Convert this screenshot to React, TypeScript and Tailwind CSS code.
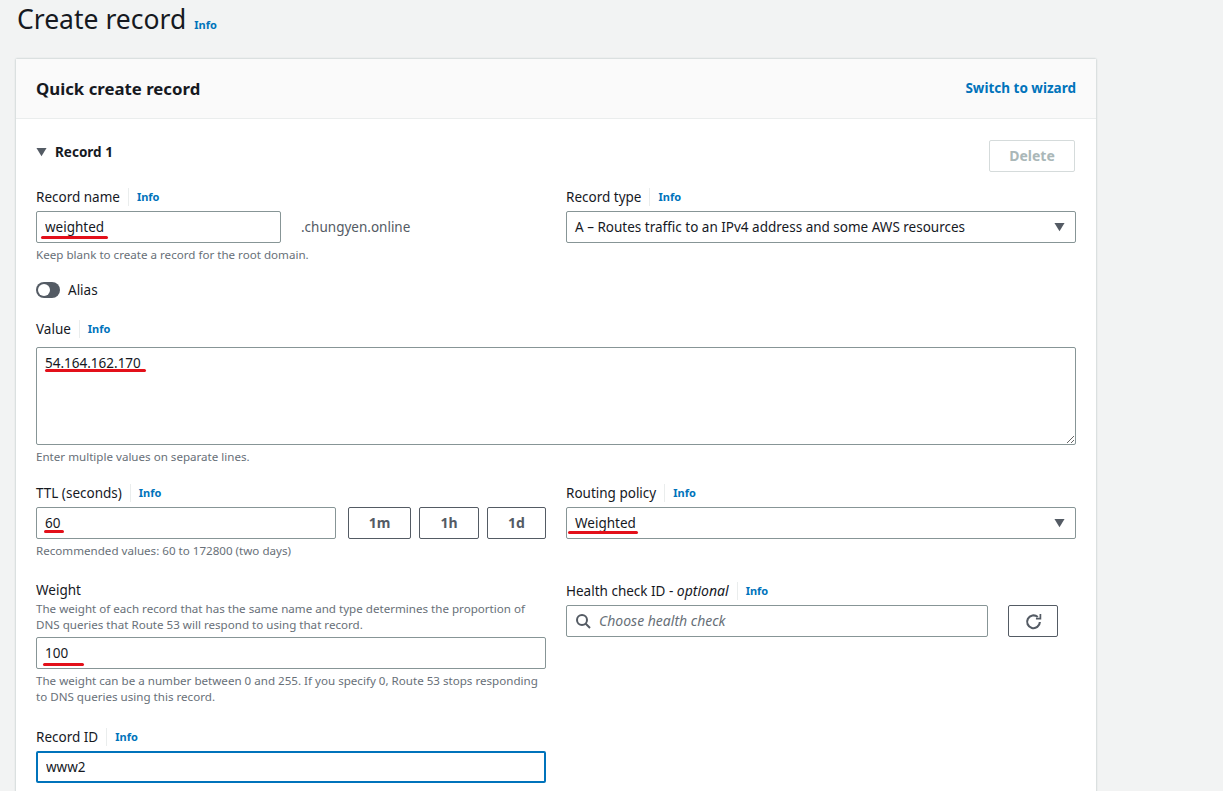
import type { ReactNode } from "react"

const font = "font-['Noto_Sans',sans-serif]"

const Info = () => (
  <span className="ml-2 border-l border-[#eaeded] pl-2 text-[11px] leading-[18px] font-bold text-[#0073bb]">Info</span>
)

const Label = ({ children }: { children: ReactNode }) => (
  <div className="flex h-[22px] items-center text-[13.5px] text-[#16191f]">
    <span>{children}</span>
    <Info />
  </div>
)

const Hint = ({ children, className = "" }: { children: ReactNode; className?: string }) => (
  <div className={`text-[11.6px] leading-4 text-[#687078] ${className}`}>{children}</div>
)

const TextInput = ({ value, mark, focused }: { value: string; mark?: string; focused?: boolean }) => (
  <div className="relative w-full">
    <input
      readOnly
      defaultValue={value}
      className={`h-8 w-full rounded-[2px] bg-white px-2 text-[13.5px] text-[#16191f] outline-none ${
        focused ? "border-2 border-[#0073bb]" : "border border-[#879596]"
      }`}
    />
    {mark && <span className={`absolute h-[3px] rounded-sm bg-[#e3101a] ${mark}`} />}
  </div>
)

const Caret = ({ className = "" }: { className?: string }) => (
  <svg viewBox="0 0 12 10" className={`h-2.5 w-[11px] ${className}`}>
    <path d="M0.5 0.5h11L6 9.5z" fill="#545b64" />
  </svg>
)

const SelectBox = ({ value, mark }: { value: string; mark?: string }) => (
  <div className="relative flex h-8 items-center justify-between rounded-[2px] border border-[#879596] bg-white pr-[10px] pl-2 text-[13.5px] text-[#16191f]">
    <span>{value}</span>
    <Caret />
    {mark && <span className={`absolute h-[3px] rounded-sm bg-[#e3101a] ${mark}`} />}
  </div>
)

const TtlButton = ({ label, width }: { label: string; width: string }) => (
  <div
    className={`flex h-8 items-center justify-center rounded-[2px] border border-[#545b64] text-sm font-bold text-[#545b64] ${width}`}
  >
    {label}
  </div>
)

export default function App() {
  return (
    <div className={`h-[791px] w-[1223px] overflow-hidden bg-[#f2f3f3] ${font}`}>
      <div className="flex h-[59px] items-start pt-[1px] pl-[17px]">
        <h1 className="text-[26.5px] leading-9 font-normal text-[#16191f]">Create record</h1>
        <span className="mt-4 ml-2 text-[11px] leading-4 font-bold text-[#0073bb]">Info</span>
      </div>

      <div className="ml-[16px] w-[1080px] bg-white pb-10 shadow-[0_0_2px_#aab7b8]">
        <div className="flex h-[60px] items-center justify-between border-b border-[#eaeded] bg-[#fafafa] px-5">
          <h2 className="text-[16.8px] font-bold text-[#16191f]">Quick create record</h2>
          <span className="text-[13.5px] font-bold text-[#0073bb]">Switch to wizard</span>
        </div>

        <div className="px-5 pt-[21px]">
          <div className="flex items-start justify-between">
            <div className="mt-[2px] flex items-center gap-2 pr-2 text-[13.5px] font-bold text-[#16191f]">
              <Caret />
              Record 1
            </div>
            <div className="mr-px flex h-8 w-[86px] items-center justify-center rounded-[2px] border border-[#d5dbdb] text-sm font-bold text-[#aab7b8]">
              Delete
            </div>
          </div>

          <div className="mt-[14px] grid grid-cols-2 gap-5">
            <div>
              <Label>Record name</Label>
              <div className="mt-[3px] flex items-center">
                <div className="w-[245px]">
                  <TextInput value="weighted" mark="left-[5px] top-[25px] w-[67px]" />
                </div>
                <span className="ml-5 text-[13.5px] text-[#545b64]">.chungyen.online</span>
              </div>
              <Hint className="mt-1">Keep blank to create a record for the root domain.</Hint>
            </div>
            <div>
              <Label>Record type</Label>
              <div className="mt-[3px]">
                <SelectBox value="A – Routes traffic to an IPv4 address and some AWS resources" />
              </div>
            </div>
          </div>

          <div className="mt-[19px] flex h-4 items-center gap-2 text-[13.5px] text-[#16191f]">
            <div className="flex h-4 w-6 items-center rounded-full bg-[#545b64] px-0.5">
              <div className="h-3 w-3 rounded-full bg-white" />
            </div>
            Alias
          </div>

          <div className="mt-[20px]">
            <Label>Value</Label>
            <div className="relative mt-[7px]">
              <textarea
                readOnly
                defaultValue="54.164.162.170"
                className="block h-[98px] w-full rounded-[2px] border border-[#879596] bg-white px-2 py-[5px] text-[13.5px] text-[#16191f] outline-none"
              />
              <span className="absolute top-[22px] left-[9px] h-[3px] w-[101px] rounded-sm bg-[#e3101a]" />
            </div>
            <Hint className="mt-1">Enter multiple values on separate lines.</Hint>
          </div>

          <div className="mt-[17px] grid grid-cols-2 gap-5">
            <div>
              <Label>TTL (seconds)</Label>
              <div className="mt-[3px] flex">
                <div className="w-[300px]">
                  <TextInput value="60" mark="left-[8px] top-[23px] w-5" />
                </div>
                <div className="ml-3 flex gap-2">
                  <TtlButton label="1m" width="w-[63px]" />
                  <TtlButton label="1h" width="w-[60px]" />
                  <TtlButton label="1d" width="w-[59px]" />
                </div>
              </div>
              <Hint className="mt-1">Recommended values: 60 to 172800 (two days)</Hint>
            </div>
            <div>
              <Label>Routing policy</Label>
              <div className="mt-[3px]">
                <SelectBox value="Weighted" mark="left-[1px] top-[23px] w-[70px]" />
              </div>
            </div>
          </div>

          <div className="mt-5 grid grid-cols-2 gap-5">
            <div>
              <div className="flex h-[22px] items-center text-[13.5px] text-[#16191f]">Weight</div>
              <Hint>
                The weight of each record that has the same name and type determines the proportion of
                <br />
                DNS queries that Route 53 will respond to using that record.
              </Hint>
              <div className="mt-1">
                <TextInput value="100" mark="left-[7px] top-[26px] w-[41px]" />
              </div>
              <Hint className="mt-1">
                The weight can be a number between 0 and 255. If you specify 0, Route 53 stops responding to
                DNS queries using this record.
              </Hint>
              <div className="mt-[21px]">
                <Label>Record ID</Label>
              </div>
              <div className="mt-[3px]">
                <TextInput value="www2" focused />
              </div>
            </div>
            <div className="pt-px">
              <Label>
                Health check ID - <i className="text-sm">optional</i>
              </Label>
              <div className="mt-[3px] flex">
                <div className="flex h-8 w-[422px] items-center gap-2 rounded-[2px] border border-[#879596] bg-white px-2 text-sm text-[#687078] italic">
                  <svg viewBox="0 0 16 16" className="h-4 w-4" fill="none" stroke="#545b64" strokeWidth="2">
                    <circle cx="7" cy="7" r="5" />
                    <path d="M10.5 10.5L15 15" />
                  </svg>
                  Choose health check
                </div>
                <div className="ml-5 flex h-8 w-[50px] items-center justify-center rounded-[2px] border border-[#545b64]">
                  <svg viewBox="0 0 16 16" className="h-[17px] w-[17px]" fill="none" stroke="#545b64" strokeWidth="2">
                    <path d="M14 8.5a6 6 0 1 1-2-4.7" />
                    <path d="M14.5 1v4.2h-4.2" strokeWidth="1.6" />
                  </svg>
                </div>
              </div>
            </div>
          </div>
        </div>
      </div>
    </div>
  )
}
